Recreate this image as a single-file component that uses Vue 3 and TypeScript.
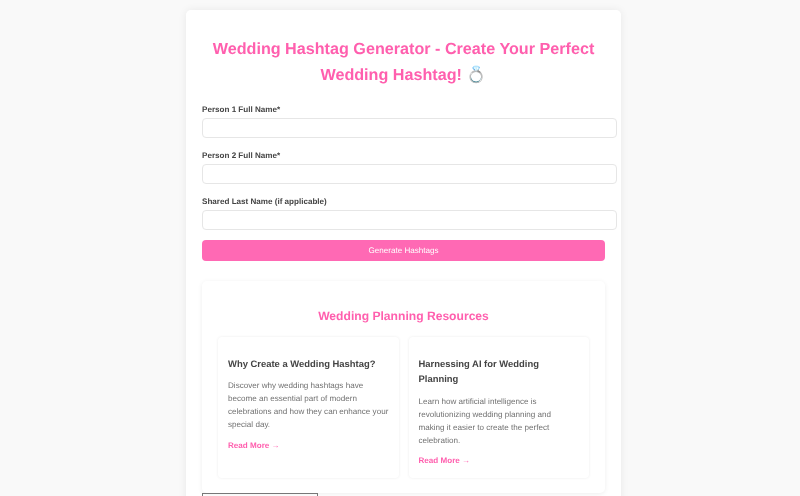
<script setup lang="ts">
interface Field { label: string }
interface Article { title: string; text: string }
const fields: Field[] = [
  { label: 'Person 1 Full Name*' },
  { label: 'Person 2 Full Name*' },
  { label: 'Shared Last Name (if applicable)' },
]
const articles: Article[] = [
  {
    title: 'Why Create a Wedding Hashtag?',
    text: 'Discover why wedding hashtags have become an essential part of modern celebrations and how they can enhance your special day.',
  },
  {
    title: 'Harnessing AI for Wedding Planning',
    text: 'Learn how artificial intelligence is revolutionizing wedding planning and making it easier to create the perfect celebration.',
  },
]
</script>

<template>
  <main class="card">
    <h1>Wedding Hashtag Generator - Create Your Perfect Wedding Hashtag! 💍</h1>
    <form class="form" @submit.prevent>
      <div v-for="f in fields" :key="f.label" class="field">
        <label>{{ f.label }}</label>
        <input type="text" />
      </div>
      <button type="submit">Generate Hashtags</button>
    </form>
    <section class="resources">
      <h2>Wedding Planning Resources</h2>
      <div class="grid">
        <article v-for="a in articles" :key="a.title">
          <h3>{{ a.title }}</h3>
          <p>{{ a.text }}</p>
          <a href="#">Read More →</a>
        </article>
      </div>
    </section>
    <div class="badge"></div>
  </main>
</template>

<style>
html, body { margin: 0; background: #f9f9f9; overflow: hidden; }
</style>

<style scoped>
.card {
  box-sizing: border-box;
  width: 435px;
  margin: 10px 0 0 186px;
  padding: 16px;
  background: #fff;
  border-radius: 5px;
  box-shadow: 0 0 8px rgba(0, 0, 0, 0.07);
  font-family: "Liberation Sans", Arial, sans-serif;
  color: #444;
  text-rendering: geometricPrecision;
  filter: blur(0.4px);
}
h1 {
  margin: 10px 0 0;
  font-size: 16.16px;
  line-height: 26px;
  text-align: center;
  color: #ff5fae;
}
.form { margin-top: 14px; }
.field { margin-bottom: 10px; }
label {
  display: block;
  padding-top: 1px;
  font-size: 8.08px;
  font-weight: bold;
  line-height: 13px;
  margin-bottom: 2px;
}
input {
  display: block;
  box-sizing: content-box;
  width: 100%;
  height: 18px;
  padding: 0 5px;
  border: 1px solid #e6e6e6;
  border-radius: 4px;
  background: #fff;
}
button {
  display: block;
  width: 100%;
  height: 21px;
  padding: 0;
  border: 0;
  border-radius: 4px;
  background: #ff69b4;
  color: #fff;
  font: 8.08px "Liberation Sans", Arial, sans-serif;
  text-rendering: geometricPrecision;
}
.resources {
  margin-top: 20px;
  padding: 16px 16px 15px;
  border-radius: 5px;
  box-shadow: 0 1px 5px rgba(0, 0, 0, 0.07);
}
h2 {
  margin: 10px 0 0;
  font-size: 12.12px;
  line-height: 19px;
  text-align: center;
  color: #ff5fae;
}
.grid {
  display: grid;
  grid-template-columns: 1fr 1fr;
  gap: 10px;
  margin-top: 11px;
}
article {
  padding: 19px 10px 10.6px;
  border-radius: 4px;
  box-shadow: 0 0 3px rgba(0, 0, 0, 0.08);
}
h3 {
  margin: 0;
  font-size: 9.44px;
  line-height: 15.4px;
  color: #444;
}
p {
  margin: 7.9px 0 0;
  font-size: 8.08px;
  line-height: 13px;
  color: #707070;
}
a {
  display: block;
  margin-top: 7.5px;
  font-size: 8.08px;
  font-weight: bold;
  line-height: 13px;
  color: #ff5fae;
  text-decoration: none;
}
.badge {
  box-sizing: border-box;
  width: 116px;
  height: 40px;
  border: 1px solid #777;
}
</style>
